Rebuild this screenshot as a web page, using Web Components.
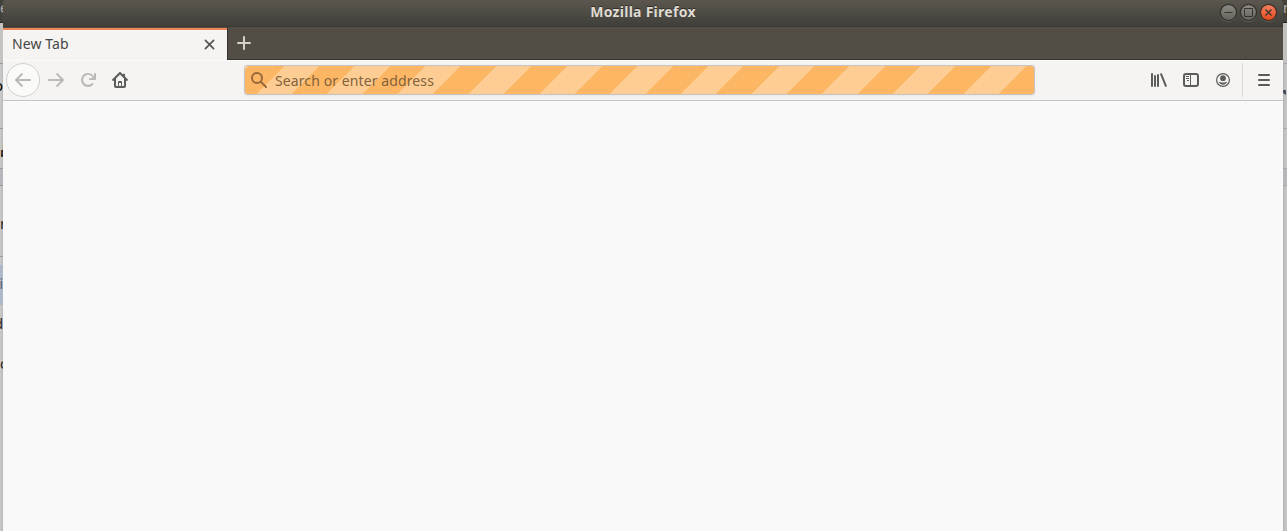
<!DOCTYPE html>
<html lang="en"><head><meta charset="utf-8"><title>Mozilla Firefox</title>
<style>body{margin:0;height:531px;overflow:hidden;background:#f9f9fa;font-family:"Noto Sans","Open Sans",sans-serif}</style></head>
<body><desktop-view></desktop-view>
<script>
const make=(name,html)=>customElements.define(name,class extends HTMLElement{
  constructor(){super();this.attachShadow({mode:'open'}).innerHTML=html;}
});

make('edge-row',`<style>
:host{display:flex;box-sizing:border-box;align-items:center;overflow:hidden;flex:none;white-space:nowrap;font-size:14px;line-height:1}
</style><slot></slot>`);

make('left-edge',`<style>
:host{display:flex;flex-direction:column;width:3px;height:531px;overflow:hidden;background:linear-gradient(90deg,#cacaca,#c6c6c6 34%,#b8b8b8);color:#252525}
edge-row{justify-content:flex-end;border-bottom:1px solid #999}
</style>
<edge-row style="height:23px;background:#45423c;color:#b0aca4;border-color:#24231f;padding-bottom:7px;justify-content:flex-start">e</edge-row>
<edge-row style="height:41px;background:#c5c3c1"></edge-row>
<edge-row style="height:65px;color:#000;align-items:flex-start;padding-top:14px;font-size:15px">o</edge-row>
<edge-row style="height:40px;justify-content:flex-start;font:bold 15px 'Noto Sans CJK SC',sans-serif">品</edge-row>
<edge-row style="height:17px;background:#b7b7bb"></edge-row>
<edge-row style="height:71px;padding-top:5px;justify-content:flex-start;font-size:15px;border-color:#9a9a9a">r</edge-row>
<edge-row style="height:8px;border:0"></edge-row>
<edge-row style="height:40px;border:0;background:#afb8c9;color:#526071;padding-bottom:2px">i</edge-row>
<edge-row style="height:40px;border:0;padding-bottom:2px">d</edge-row>
<edge-row style="height:40px;border:0;padding-bottom:2px;justify-content:flex-start">c</edge-row>`);

make('right-edge',`<style>
:host{display:flex;flex-direction:column;width:4px;height:531px;overflow:hidden;background:linear-gradient(90deg,#b5b5b5,#c1c1c1 50%,#c8c8c8)}
edge-row{border-bottom:1px solid #aaa}
</style>
<edge-row style="height:23px;background:#45423c;border-color:#24231f;color:#b9b6ae;padding-bottom:7px">n</edge-row>
<edge-row style="height:41px;background:#c3c1bf"></edge-row>
<edge-row style="height:65px;align-items:flex-start;padding-top:25px"><svg width="4" height="7"><path d="M0 1h3v5L0 4z" fill="#454e57"/></svg></edge-row>
<edge-row style="height:40px"></edge-row>
<edge-row style="height:17px;background:#b7b7bb"></edge-row>`);

make('window-button',`<style>
:host{display:flex;align-items:center;justify-content:center;box-sizing:border-box;width:17px;height:17px;border-radius:50%;border:1px solid #302e2a;background:linear-gradient(#8c8a83,#65635d) padding-box;box-shadow:0 0 0 .5px #35332e88,0 1px 0 #6b6860;}
:host([kind=close]){background:linear-gradient(#f58060,#e64a1d) padding-box;border-color:#492a20}
svg{display:block;flex:none;fill:none;stroke:#373530;stroke-width:1}
</style><svg width="9" height="9"></svg>`);

make('title-bar',`<style>
:host{display:grid;grid-template-columns:1fr auto 1fr;height:27px;box-sizing:border-box;border-bottom:1px solid #3b3933;background:linear-gradient(#5b574e,#403f3a);border-radius:3px 3px 0 0}
h1{grid-column:2;margin:0;padding-top:1px;font-size:14px;line-height:22px;font-weight:700;color:#dfdbd2;letter-spacing:.27px;text-shadow:0 -1px 0 #302e29;white-space:nowrap}
.controls{grid-column:3;display:flex;justify-self:end;gap:3px;padding:4px 6px 0 0;height:17px}
</style><h1><slot></slot></h1><div class="controls"><window-button kind="min"></window-button><window-button kind="max"></window-button><window-button kind="close"></window-button></div>`);

make('browser-tab',`<style>
:host{display:flex;align-items:center;justify-content:space-between;box-sizing:border-box;width:224px;height:32px;margin-top:1px;border-top:2px solid #f0855c;background:#f5f4f2;color:#464644;padding:0 12px 2px 9px;font-size:14px}
span{letter-spacing:.08px;line-height:20px;white-space:nowrap}
svg{display:block;margin-top:1px}
</style><span><slot></slot></span><svg width="11" height="11" viewBox="0 0 11 11" fill="none" stroke="#55534f" stroke-width="1.7" stroke-linecap="round"><path d="M1.4 1.4l8.2 8.2M9.6 1.4L1.4 9.6"/></svg>`);

make('tab-strip',`<style>
:host{display:flex;height:33px;background:#524e46}
.rest{flex:1;box-sizing:border-box;border-left:1px solid #38342f;border-bottom:1px solid #38342f;padding:9px 0 0 9px}
svg{display:block}
</style><slot></slot><div class="rest"><svg width="14" height="14" stroke="#d5d2ca" stroke-width="2" stroke-linecap="round"><path d="M7 1v12M1 7h12"/></svg></div>`);

make('tool-icon',`<style>:host{display:flex;align-items:center;justify-content:center;flex:none;width:32px;height:32px;color:#5c5c5a}:host([disabled]){color:#bab9b7}::slotted(svg){display:block;fill:currentColor}</style><slot></slot>`);

const icons={
back:'<path d="M15 7H3.4l4.3-4.3a1 1 0 0 0-1.4-1.4l-6 6a1 1 0 0 0 0 1.4l6 6a1 1 0 0 0 1.4-1.4L3.4 9H15a1 1 0 0 0 0-2z"/>',
forward:'<path d="M1 7h11.6L8.3 2.7a1 1 0 0 1 1.4-1.4l6 6a1 1 0 0 1 0 1.4l-6 6a1 1 0 0 1-1.4-1.4L12.6 9H1a1 1 0 0 1 0-2z"/>',
reload:'<path d="M15 1a1 1 0 0 0-1 1v2.4A7 7 0 1 0 13.1 12.8a1 1 0 1 0-1.5-1.4A5 5 0 1 1 12.8 6H10a1 1 0 0 0 0 2h5a1 1 0 0 0 1-1V2a1 1 0 0 0-1-1z"/>',
home:'<path d="M15.7 7.3l-2.7-2.7V2.2A1.2 1.2 0 0 0 11 2.2v.4L8.7.3a1 1 0 0 0-1.4 0l-7 7a1 1 0 0 0 1.4 1.4L2 8.4V14a2 2 0 0 0 2 2h8a2 2 0 0 0 2-2V8.4l.3.3a1 1 0 0 0 1.4-1.4zM12 14h-2v-4a1 1 0 0 0-1-1H7a1 1 0 0 0-1 1v4H4V6.4l4-4 4 4zm-4-3h1v3H7v-3z"/>',
library:'<path d="M1 1a1 1 0 0 1 1 1v12a1 1 0 0 1-2 0V2a1 1 0 0 1 1-1zM4 3a1 1 0 0 1 1 1v10a1 1 0 0 1-2 0V4a1 1 0 0 1 1-1zM7 2a1 1 0 0 1 1 1v11a1 1 0 0 1-2 0V3a1 1 0 0 1 1-1zM9.1 2.3a1 1 0 0 1 1.8-.7l4.9 12a1 1 0 0 1-1.8.8z"/>',
sidebar:'<path fill-rule="evenodd" d="M3 1h10a3 3 0 0 1 3 3v8a3 3 0 0 1-3 3H3a3 3 0 0 1-3-3V4a3 3 0 0 1 3-3zm0 2a1 1 0 0 0-1 1v8a1 1 0 0 0 1 1h4V3zm5 0v10h5a1 1 0 0 0 1-1V4a1 1 0 0 0-1-1zM3 4h3v1H3zm0 2h3v1H3zm1 2h2v1H4z"/>',
account:'<circle cx="8" cy="8" r="6.4" fill="none" stroke="currentColor" stroke-width="1.2"/><circle cx="8" cy="6.2" r="2.9"/><path d="M3.8 9.6c1 .7 2.4 1 4.2 1s3.2-.3 4.2-1c-.3 2-2.2 3.2-4.2 3.2s-3.9-1.2-4.2-3.2z"/>',
menu:'<path d="M3 2h10a1 1 0 0 1 0 2H3a1 1 0 0 1 0-2zM3 7h10a1 1 0 0 1 0 2H3a1 1 0 0 1 0-2zM3 12h10a1 1 0 0 1 0 2H3a1 1 0 0 1 0-2z"/>'};
const icon=n=>`<svg width="16" height="16" viewBox="0 0 16 16">${icons[n]}</svg>`;

make('url-bar',`<style>
:host{display:flex;align-items:center;box-sizing:border-box;flex:none;width:791px;height:30px;border:1px solid #c5c4c2;border-radius:3px;background:repeating-linear-gradient(-45deg,#fdb764 0 25px,#fecd94 25px 50px) padding-box;color:#83623c;box-shadow:0 1px 3px #0000000d;padding-left:6px;gap:8px;font-size:14px}
span{letter-spacing:.1px;line-height:20px;white-space:nowrap;padding-top:2px}
svg{display:block;flex:none}
</style><svg width="16" height="16" viewBox="0 0 16 16" fill="none" stroke="#96683a" stroke-width="2" stroke-linecap="round"><circle cx="6" cy="6" r="5"/><path d="M10 10l5 5"/></svg><span><slot></slot></span>`);

make('nav-bar',`<style>
:host{display:flex;align-items:center;height:41px;box-sizing:border-box;background:#f5f4f2;border-top:1px solid #fafaf9;border-bottom:1px solid #c5c5c4;padding:0 3px 1px}
.back{display:flex;box-sizing:border-box;width:34px;height:34px;border:1px solid #d1d0ce;border-radius:50%;background:#fafaf9}
.left{display:flex;align-items:center;width:238px}
.right{display:flex;align-items:center;margin-left:auto}
.sep{width:1px;height:34px;background:#dbdad8;margin:0 5px 0 3px}
</style><div class="left"><div class="back"><tool-icon disabled>${icon('back')}</tool-icon></div><tool-icon disabled>${icon('forward')}</tool-icon><tool-icon disabled>${icon('reload')}</tool-icon><tool-icon>${icon('home')}</tool-icon></div>
<url-bar>Search or enter address</url-bar>
<div class="right"><tool-icon>${icon('library')}</tool-icon><tool-icon>${icon('sidebar')}</tool-icon><tool-icon>${icon('account')}</tool-icon><div class="sep"></div><tool-icon>${icon('menu')}</tool-icon></div>`);

make('browser-window',`<style>:host{display:block;width:1280px;height:531px;background:linear-gradient(#45423c 0 20px,#f9f9f9 20px)}</style>
<title-bar>Mozilla Firefox</title-bar><tab-strip><browser-tab>New Tab</browser-tab></tab-strip><nav-bar></nav-bar>`);
make('desktop-view',`<style>:host{display:grid;grid-template-columns:3px 1280px 4px;height:531px}</style><left-edge></left-edge><browser-window></browser-window><right-edge></right-edge>`);

const glyphs={min:'<path d="M.5 4.5h8"/>',max:'<path d="M.5 .5h8v8h-8z"/>',close:'<path d="M1.5 1.5l6 6M7.5 1.5l-6 6" stroke-width="1.3"/>'};
const findButtons=root=>root.querySelectorAll('*').forEach(e=>{
  if(e.localName==='window-button')e.shadowRoot.querySelector('svg').innerHTML=glyphs[e.getAttribute('kind')];
  else if(e.shadowRoot)findButtons(e.shadowRoot);
});
findButtons(document);
</script></body></html>
